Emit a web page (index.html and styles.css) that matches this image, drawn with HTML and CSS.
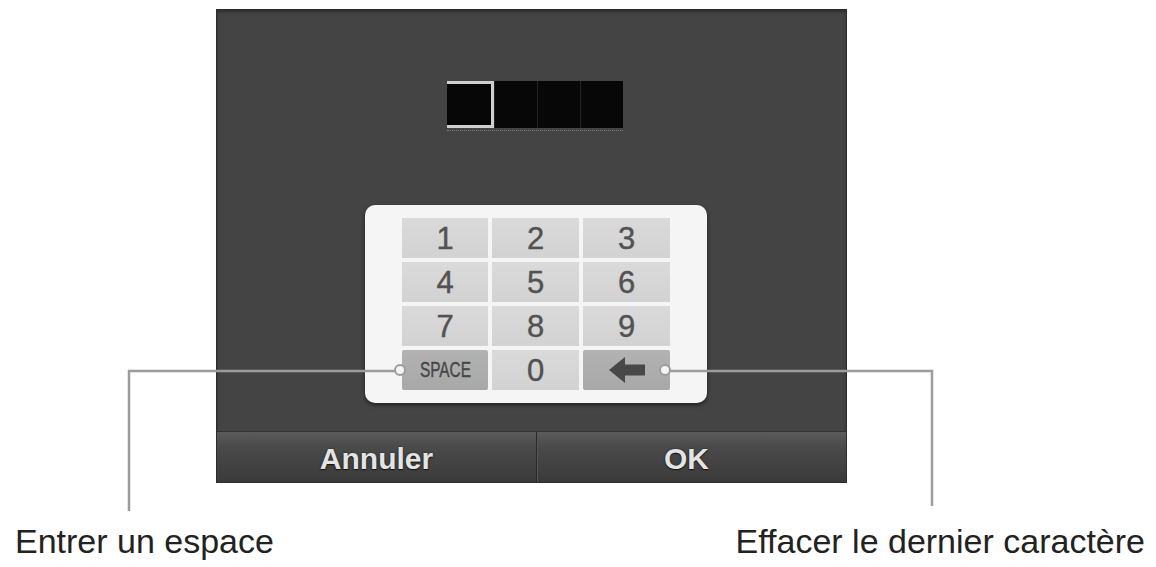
FILE: index.html
```html
<!DOCTYPE html>
<html lang="fr">
<head>
<meta charset="utf-8">
<title>Saisie du code</title>
<link rel="stylesheet" href="styles.css">
</head>
<body>
<div class="page">
  <div class="figure">
    <div class="screen">
      <div class="code">
        <div class="cell cell-active"></div>
        <div class="cell"></div>
        <div class="cell"></div>
        <div class="cell"></div>
      </div>
      <div class="keypad">
        <div class="key">1</div>
        <div class="key">2</div>
        <div class="key">3</div>
        <div class="key">4</div>
        <div class="key">5</div>
        <div class="key">6</div>
        <div class="key">7</div>
        <div class="key">8</div>
        <div class="key">9</div>
        <div class="key key-special"><span class="space-label">SPACE</span></div>
        <div class="key">0</div>
        <div class="key key-special">
          <svg class="back-icon" width="36" height="26" viewBox="0 0 36 26" aria-hidden="true">
            <polygon points="0,13 16,0 16,26" fill="#484848"/>
            <rect x="14" y="7.5" width="22" height="11" fill="#484848"/>
          </svg>
        </div>
      </div>
      <div class="bar">
        <div class="bar-btn bar-left">Annuler</div>
        <div class="bar-btn bar-right">OK</div>
      </div>
    </div>
    <svg class="callouts" width="1156" height="520" viewBox="0 0 1156 520" aria-hidden="true">
      <polyline points="129,511 129,371 395,371" fill="none" stroke="#9c9c9c" stroke-width="2.5"/>
      <circle cx="400" cy="370" r="5" fill="#f4f4f4" stroke="#9c9c9c" stroke-width="2"/>
      <polyline points="670,371 932,371 932,506" fill="none" stroke="#9c9c9c" stroke-width="2.5"/>
      <circle cx="665" cy="370" r="5" fill="#f4f4f4" stroke="#9c9c9c" stroke-width="2"/>
    </svg>
  </div>
  <div class="labels">
    <span class="label">Entrer un espace</span>
    <span class="label">Effacer le dernier caractère</span>
  </div>
</div>
</body>
</html>
```

FILE: styles.css
```css
* { box-sizing: border-box; }

html, body {
  margin: 0;
  padding: 0;
  background: #ffffff;
}

.page {
  width: 1156px;
  height: 567px;
  overflow: hidden;
  font-family: "Liberation Sans", Arial, sans-serif;
}

.figure {
  position: relative;
  padding: 9px 0 0 216px;
}

.screen {
  width: 631px;
  height: 474px;
  background: #444444;
  border: 1px solid #2c2c2c;
  display: flex;
  flex-direction: column;
  align-items: flex-start;
  box-shadow: inset 0 2px 3px rgba(0,0,0,0.35);
}

.code {
  margin: 71px 0 0 230px;
  display: flex;
  padding-bottom: 2px;
  border-bottom: 1px dotted #7a7a7a;
}

.cell {
  width: 43px;
  height: 47px;
  background: #070707;
  border-left: 1px solid #222;
}

.cell:first-child { border-left: none; }

.cell-active {
  width: 47px;
  border: 3px solid #cfcfcf;
}

.keypad {
  margin: 74px 0 0 148px;
  width: 342px;
  height: 198px;
  padding: 13px 37px;
  background: #f5f5f5;
  border-radius: 10px;
  box-shadow: 0 2px 4px rgba(0,0,0,0.55);
  display: grid;
  grid-template-columns: 86px 87px 87px;
  grid-template-rows: repeat(4, 40px);
  gap: 4px;
}

.key {
  background: linear-gradient(#dadada, #d2d2d2);
  display: flex;
  align-items: center;
  justify-content: center;
  font-size: 31px;
  color: #525252;
  line-height: 1;
  -webkit-text-stroke: 0.4px #525252;
}

.key-special {
  background: linear-gradient(#b2b2b2, #a8a8a8);
  border-radius: 2px;
}

.space-label {
  display: inline-block;
  font-size: 22px;
  color: #474747;
  transform: scaleX(0.7);
  -webkit-text-stroke: 0.4px #474747;
}

.back-icon { display: block; }

.bar {
  margin-top: auto;
  width: 100%;
  height: 51px;
  display: grid;
  grid-template-columns: 320px 1fr;
  background: linear-gradient(#5b5b5b 0%, #4a4a4a 30%, #3a3a3a 100%);
  border-top: 1px solid #333;
}

.bar-btn {
  display: flex;
  align-items: center;
  justify-content: center;
  font-size: 30px;
  font-weight: bold;
  color: #e4e4e4;
  text-shadow: 0 0 2px #1a1a1a, 0 1px 1px #111;
  padding-top: 4px;
}

.bar-left {
  border-right: 1px solid #2a2a2a;
  box-shadow: 1px 0 0 #555;
}

.bar-right {
  padding-right: 10px;
}

.callouts {
  position: absolute;
  left: 0;
  top: 0;
  pointer-events: none;
}

.labels {
  margin-top: 39px;
  display: flex;
  justify-content: space-between;
  padding: 0 11px 0 15px;
}

.label {
  font-size: 34px;
  line-height: 39px;
  color: #222222;
}
```
